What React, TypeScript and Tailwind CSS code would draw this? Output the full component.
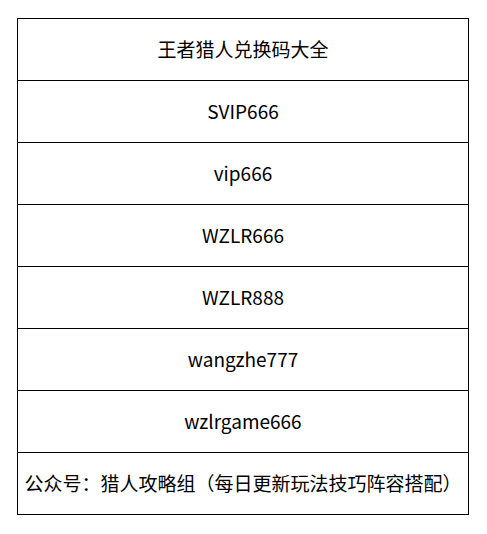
import React from 'react';

const rows = [
	'王者猎人兑换码大全',
	'SVIP666',
	'vip666',
	'WZLR666',
	'WZLR888',
	'wangzhe777',
	'wzlrgame666',
	'公众号：猎人攻略组（每日更新玩法技巧阵容搭配）',
];

const App: React.FC = () => {
	return (
		<div
			className="w-[487px] h-[534px] bg-white pt-[18px] pl-[17px]"
			style={{ fontFamily: '"Noto Sans CJK SC", "Noto Sans", sans-serif' }}
		>
			<div className="w-[452px] border border-black">
				{rows.map((text, i) => (
					<div
						key={i}
						className={`flex items-center justify-center text-[19px] text-black ${i > 0 ? 'h-[62px] border-t border-black' : 'h-[61px]'}`}
					>
						{text}
					</div>
				))}
			</div>
		</div>
	);
};

export default App;
